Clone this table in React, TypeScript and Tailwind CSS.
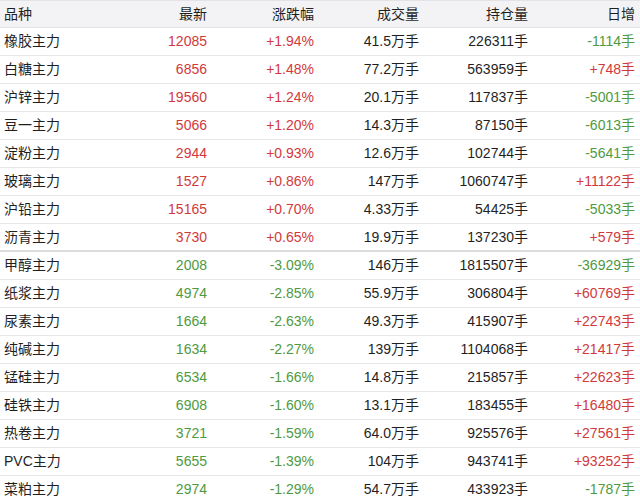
const rows = [
  { name: "橡胶主力", last: "12085", pct: "+1.94%", vol: "41.5万手", oi: "226311手", day: "-1114手" },
  { name: "白糖主力", last: "6856", pct: "+1.48%", vol: "77.2万手", oi: "563959手", day: "+748手" },
  { name: "沪锌主力", last: "19560", pct: "+1.24%", vol: "20.1万手", oi: "117837手", day: "-5001手" },
  { name: "豆一主力", last: "5066", pct: "+1.20%", vol: "14.3万手", oi: "87150手", day: "-6013手" },
  { name: "淀粉主力", last: "2944", pct: "+0.93%", vol: "12.6万手", oi: "102744手", day: "-5641手" },
  { name: "玻璃主力", last: "1527", pct: "+0.86%", vol: "147万手", oi: "1060747手", day: "+11122手" },
  { name: "沪铅主力", last: "15165", pct: "+0.70%", vol: "4.33万手", oi: "54425手", day: "-5033手" },
  { name: "沥青主力", last: "3730", pct: "+0.65%", vol: "19.9万手", oi: "137230手", day: "+579手" },
  { name: "甲醇主力", last: "2008", pct: "-3.09%", vol: "146万手", oi: "1815507手", day: "-36929手" },
  { name: "纸浆主力", last: "4974", pct: "-2.85%", vol: "55.9万手", oi: "306804手", day: "+60769手" },
  { name: "尿素主力", last: "1664", pct: "-2.63%", vol: "49.3万手", oi: "415907手", day: "+22743手" },
  { name: "纯碱主力", last: "1634", pct: "-2.27%", vol: "139万手", oi: "1104068手", day: "+21417手" },
  { name: "锰硅主力", last: "6534", pct: "-1.66%", vol: "14.8万手", oi: "215857手", day: "+22623手" },
  { name: "硅铁主力", last: "6908", pct: "-1.60%", vol: "13.1万手", oi: "183455手", day: "+16480手" },
  { name: "热卷主力", last: "3721", pct: "-1.59%", vol: "64.0万手", oi: "925576手", day: "+27561手" },
  { name: "PVC主力", last: "5655", pct: "-1.39%", vol: "104万手", oi: "943741手", day: "+93252手" },
  { name: "菜粕主力", last: "2974", pct: "-1.29%", vol: "54.7万手", oi: "433923手", day: "-1787手" },
];

const color = (s: string) => (s.startsWith("-") ? "text-[#4f9a3f]" : "text-[#d2393c]");

const grid = "grid grid-cols-[120px_92px_107px_105px_109px_107px] items-center";

export default function App() {
  return (
    <div
      className="w-[640px] h-[498px] overflow-hidden bg-white text-[14px] text-[#1f1f1f]"
      style={{ fontFamily: '"Liberation Sans", "Noto Sans CJK SC", sans-serif' }}
    >
      <div className={`${grid} h-[28px] bg-[#f3f3f5] border-t border-b border-[#e3e3e6]`}>
        <div className="pl-[4px]">品种</div>
        <div className="text-right pr-[5px]">最新</div>
        <div className="text-right pr-[5px]">涨跌幅</div>
        <div className="text-right pr-[5px]">成交量</div>
        <div className="text-right pr-[5px]">持仓量</div>
        <div className="text-right pr-[5px]">日增</div>
      </div>
      {rows.map((r, i) => (
        <div
          key={r.name}
          className={`${grid} ${i === 7 ? "h-[28px] border-b-2 border-[#dcdcdf]" : "h-[28px] border-b border-[#e6e6e8]"}`}
        >
          <div className="pl-[4px]">{r.name}</div>
          <div className={`text-right pr-[5px] ${color(r.pct)}`}>{r.last}</div>
          <div className={`text-right pr-[5px] ${color(r.pct)}`}>{r.pct}</div>
          <div className="text-right pr-[5px]">{r.vol}</div>
          <div className="text-right pr-[5px]">{r.oi}</div>
          <div className={`text-right pr-[5px] ${color(r.day)}`}>{r.day}</div>
        </div>
      ))}
    </div>
  );
}
